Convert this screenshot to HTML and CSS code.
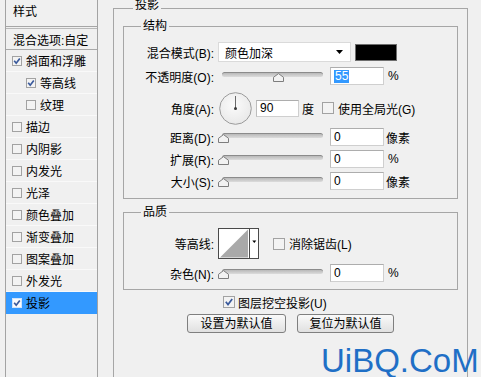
FILE: index.html
```html
<!DOCTYPE html>
<html lang="zh">
<head>
<meta charset="utf-8">
<title>图层样式</title>
<link rel="stylesheet" href="styles.css">
</head>
<body>
<div class="dialog">
  <aside class="styles-list">
    <div class="list-head">样式</div>
    <div class="list-row blend-opt">混合选项:自定</div>
    <div class="list-row"><svg class="cb" viewBox="0 0 10 10"><rect x="0.5" y="0.5" width="9" height="9"/><path d="M2.2 4.8 L4.2 7.2 L7.8 2.4"/></svg>斜面和浮雕</div>
    <div class="list-row sub"><svg class="cb" viewBox="0 0 10 10"><rect x="0.5" y="0.5" width="9" height="9"/><path d="M2.2 4.8 L4.2 7.2 L7.8 2.4"/></svg>等高线</div>
    <div class="list-row sub"><svg class="cb" viewBox="0 0 10 10"><rect x="0.5" y="0.5" width="9" height="9"/></svg>纹理</div>
    <div class="list-row"><svg class="cb" viewBox="0 0 10 10"><rect x="0.5" y="0.5" width="9" height="9"/></svg>描边</div>
    <div class="list-row"><svg class="cb" viewBox="0 0 10 10"><rect x="0.5" y="0.5" width="9" height="9"/></svg>内阴影</div>
    <div class="list-row"><svg class="cb" viewBox="0 0 10 10"><rect x="0.5" y="0.5" width="9" height="9"/></svg>内发光</div>
    <div class="list-row"><svg class="cb" viewBox="0 0 10 10"><rect x="0.5" y="0.5" width="9" height="9"/></svg>光泽</div>
    <div class="list-row"><svg class="cb" viewBox="0 0 10 10"><rect x="0.5" y="0.5" width="9" height="9"/></svg>颜色叠加</div>
    <div class="list-row"><svg class="cb" viewBox="0 0 10 10"><rect x="0.5" y="0.5" width="9" height="9"/></svg>渐变叠加</div>
    <div class="list-row"><svg class="cb" viewBox="0 0 10 10"><rect x="0.5" y="0.5" width="9" height="9"/></svg>图案叠加</div>
    <div class="list-row"><svg class="cb" viewBox="0 0 10 10"><rect x="0.5" y="0.5" width="9" height="9"/></svg>外发光</div>
    <div class="list-row active"><svg class="cb" viewBox="0 0 10 10"><rect x="0.5" y="0.5" width="9" height="9"/><path d="M2.2 4.8 L4.2 7.2 L7.8 2.4"/></svg>投影</div>
  </aside>

  <fieldset class="panel">
    <legend class="panel-title">投影</legend>

    <fieldset class="group structure">
      <legend>结构</legend>
      <div class="row r-blend">
        <label class="lbl">混合模式(B):</label>
        <div class="select">颜色加深<svg class="caret" viewBox="0 0 7 4"><path d="M0 0 H7 L3.5 4 Z"/></svg></div>
        <span class="swatch"></span>
      </div>
      <div class="row r-opacity">
        <label class="lbl">不透明度(O):</label>
        <div class="slider"><span class="track"></span><svg class="thumb" style="left:55px" viewBox="0 0 11 9"><path d="M0.5 8.5 V4.3 L5.5 0.6 L10.5 4.3 V8.5 Z"/></svg></div>
        <span class="field"><span class="sel">55</span></span>
        <span class="unit">%</span>
      </div>
      <div class="row r-angle">
        <label class="lbl">角度(A):</label>
        <svg class="dial" viewBox="0 0 33 33"><defs><radialGradient id="dg" cx="0.45" cy="0.4" r="0.7"><stop offset="0" stop-color="#fbfbfb"/><stop offset="1" stop-color="#e6e6e6"/></radialGradient></defs><circle cx="16.5" cy="16.5" r="15.8" fill="url(#dg)" stroke="#9b9b9b"/><line x1="16.5" y1="16.5" x2="16.5" y2="4" stroke="#6a6a6a" stroke-width="1"/><circle cx="16.5" cy="16.5" r="1.5" fill="#3a3a3a"/></svg>
        <span class="field f-angle">90</span>
        <span class="unit u-deg">度</span>
        <svg class="cb big" viewBox="0 0 12 12"><rect x="0.5" y="0.5" width="11" height="11"/></svg>
        <span class="cb-text">使用全局光(G)</span>
      </div>
      <div class="row r-dist">
        <label class="lbl">距离(D):</label>
        <div class="slider"><span class="track"></span><svg class="thumb" style="left:0px" viewBox="0 0 11 9"><path d="M0.5 8.5 V4.3 L5.5 0.6 L10.5 4.3 V8.5 Z"/></svg></div>
        <span class="field">0</span>
        <span class="unit u-px">像素</span>
      </div>
      <div class="row r-spread">
        <label class="lbl">扩展(R):</label>
        <div class="slider"><span class="track"></span><svg class="thumb" style="left:0px" viewBox="0 0 11 9"><path d="M0.5 8.5 V4.3 L5.5 0.6 L10.5 4.3 V8.5 Z"/></svg></div>
        <span class="field">0</span>
        <span class="unit">%</span>
      </div>
      <div class="row r-size">
        <label class="lbl">大小(S):</label>
        <div class="slider"><span class="track"></span><svg class="thumb" style="left:0px" viewBox="0 0 11 9"><path d="M0.5 8.5 V4.3 L5.5 0.6 L10.5 4.3 V8.5 Z"/></svg></div>
        <span class="field">0</span>
        <span class="unit u-px">像素</span>
      </div>
    </fieldset>

    <fieldset class="group quality">
      <legend>品质</legend>
      <div class="row r-contour">
        <label class="lbl">等高线:</label>
        <svg class="contour" viewBox="0 0 41 31"><rect x="0.5" y="0.5" width="40" height="30" fill="#fff" stroke="#4a4a4a"/><polygon points="2,29.5 30,1.5 30,29.5" fill="#a9a9a9"/><line x1="31.5" y1="1" x2="31.5" y2="30" stroke="#4a4a4a"/><path d="M34.3 12.6 H38.3 L36.3 15 Z" fill="#000"/></svg>
        <svg class="cb big c-anti" viewBox="0 0 12 12"><rect x="0.5" y="0.5" width="11" height="11"/></svg>
        <span class="cb-text">消除锯齿(L)</span>
      </div>
      <div class="row r-noise">
        <label class="lbl">杂色(N):</label>
        <div class="slider"><span class="track"></span><svg class="thumb" style="left:0px" viewBox="0 0 11 9"><path d="M0.5 8.5 V4.3 L5.5 0.6 L10.5 4.3 V8.5 Z"/></svg></div>
        <span class="field">0</span>
        <span class="unit">%</span>
      </div>
    </fieldset>

    <div class="knockout">
      <svg class="cb big" viewBox="0 0 12 12"><rect x="0.5" y="0.5" width="11" height="11"/><path d="M2.8 5.8 L5 8.6 L9.2 3"/></svg>
      <span class="cb-text">图层挖空投影(U)</span>
    </div>
    <div class="buttons">
      <button class="btn b-set">设置为默认值</button>
      <button class="btn b-reset">复位为默认值</button>
    </div>
  </fieldset>
</div>
<div class="watermark">UiBQ.CoM</div>
</body>
</html>
```
FILE: styles.css
```css
* { box-sizing: border-box; }
html, body { margin: 0; padding: 0; }
body {
  width: 481px;
  height: 377px;
  overflow: hidden;
  position: relative;
  background: #f0f0f0;
  font-family: "Liberation Sans", "Noto Sans CJK SC", sans-serif;
  font-size: 12px;
  color: #000;
}
.dialog { display: flex; height: 377px; align-items: flex-start; }

/* left list */
.styles-list {
  margin-left: 5px;
  width: 93px;
  height: 377px;
  border-left: 1px solid #a3a3a3;
  border-right: 1px solid #a3a3a3;
  display: flex;
  flex-direction: column;
}
.list-head {
  height: 27px;
  line-height: 24px;
  padding-left: 7px;
  border-bottom: 1px solid #a6a6a6;
}
.list-row {
  height: 22px;
  display: flex;
  align-items: center;
  padding-left: 6px;
  border-bottom: 1px solid #f9f9f9;
  white-space: nowrap;
}
.list-row.blend-opt {
  margin-top: 1px;
  border-top: 1px solid #b9b9b9;
  border-bottom: 1px solid #a9a9a9;
  padding-left: 7px;
}
.list-row.sub { padding-left: 20px; }
.list-row.active { background: #3399ff; border-bottom-color: #3399ff; }

.cb { width: 10px; height: 10px; flex: none; margin-right: 4px; }
.cb rect { fill: #f3f3f3; stroke: #a2a2a2; }
.cb path { fill: none; stroke: #3a5a9c; stroke-width: 1.7; }
.list-row.active .cb rect { fill: #fbfbfb; stroke: #d0e4fb; }
.cb.big { width: 12px; height: 12px; }

/* main panel */
.panel {
  margin: -1px 0 0 15px;
  width: 355px;
  height: 378px;
  border: 1px solid #a6a6a6;
  border-bottom: none;
  padding: 0 9px;
  min-width: 0;
}
.panel-title {
  margin-left: 10px;
  padding: 0 2px 6px;
  line-height: 12px;
}
.group {
  margin: 0;
  padding: 0;
  border: 1px solid #a6a6a6;
  min-width: 0;
}
.group legend {
  margin-left: 17px;
  padding: 0 2px;
  line-height: 13px;
}
.structure { margin-top: 3px; padding-bottom: 8px; }
.quality { margin-top: 7px; padding-bottom: 7px; }

.row { display: flex; align-items: center; white-space: nowrap; }
.lbl { width: 90px; text-align: right; flex: none; }

.r-blend { height: 22px; margin-top: 8px; }
.r-opacity { height: 18px; margin-top: 4px; }
.r-angle { height: 34px; margin-top: 6px; }
.r-dist { height: 18px; margin-top: 3px; }
.r-spread { height: 18px; margin-top: 4px; }
.r-size { height: 18px; margin-top: 4px; }
.r-contour { height: 31px; margin-top: 9px; }
.r-noise { height: 18px; margin-top: 5px; }

.select {
  margin-left: 4px;
  width: 133px;
  height: 20px;
  background: #fff;
  border: 1px solid #dadada;
  display: flex;
  align-items: center;
  padding-left: 6px;
  position: relative;
}
.caret { width: 7px; height: 4px; margin-left: auto; margin-right: 7px; }
.caret path { fill: #000; }
.swatch {
  margin-left: 4px;
  width: 42px;
  height: 17px;
  background: #000;
  border: 1px solid #6e6e6e;
}

.slider { margin-left: 4px; width: 111px; height: 18px; position: relative; flex: none; }
.track {
  display: block;
  margin: 5px 6px 0 4px;
  height: 5px;
  border-radius: 3px;
  border-top: 1px solid #8b8b8b;
  background: linear-gradient(#b9b9b9, #dcdcdc);
}
.thumb { position: absolute; top: 6px; width: 11px; height: 9px; }
.thumb path { fill: #f2f2f2; stroke: #7d7d7d; }

.field {
  margin-left: 1px;
  width: 54px;
  height: 18px;
  background: #fff;
  border: 1px solid #cfcfcf;
  border-top-color: #adadad;
  border-left-color: #bdbdbd;
  display: flex;
  align-items: center;
  padding-left: 3px;
  flex: none;
}
.sel { background: #3399ff; color: #fff; padding: 0 1px; line-height: 13px; }
.unit { margin-left: 4px; }
.u-px { margin-left: 2px; }

.dial { margin-left: 5px; width: 33px; height: 33px; flex: none; }
.f-angle { margin-left: 4px; width: 43px; height: 17px; }
.u-deg { margin-left: 3px; }
.r-angle .cb.big { margin-left: 8px; margin-right: 4px; }
.cb-text { white-space: nowrap; }

.contour { margin-left: 4px; width: 41px; height: 31px; flex: none; }
.c-anti { margin-left: 14px; margin-right: 4px; }

.knockout {
  margin-top: 6px;
  padding-left: 100px;
  height: 12px;
  display: flex;
  align-items: center;
}
.knockout .cb.big { margin-right: 3px; }
.buttons { margin-top: 6px; padding-left: 64px; display: flex; gap: 11px; }
.btn {
  height: 19px;
  padding: 0;
  font: inherit;
  color: #000;
  background: linear-gradient(#fafafa, #e0e0e0);
  border: 1px solid #7f7f7f;
  border-radius: 3px;
  line-height: 16px;
}
.b-set { width: 99px; }
.b-reset { width: 97px; }

.watermark {
  position: absolute;
  left: 321px;
  top: 344px;
  font-family: "Liberation Sans", sans-serif;
  font-size: 33px;
  line-height: 33px;
  color: #1f6fc6;
  white-space: nowrap;
}
```
